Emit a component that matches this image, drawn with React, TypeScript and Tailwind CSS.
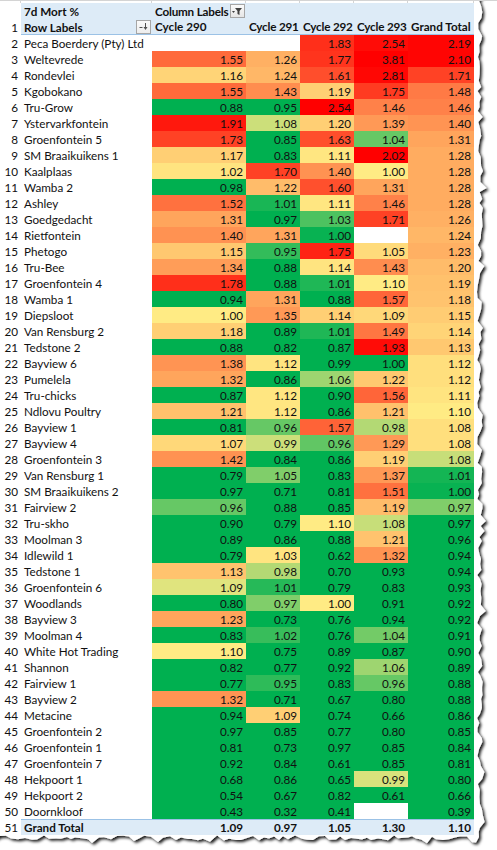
import React from "react";

type Row = [string, (number | null)[], number[]];
const G = -1;

const rows: Row[] = [
  ["Peca Boerdery (Pty) Ltd", [null, null, 1.83, 2.54, 2.19], [0, 0, 0.8, 0.95, 0.98]],
  ["Weltevrede", [1.55, 1.26, 1.77, 3.81, 2.1], [0.55, 0.25, 0.78, 1, 0.98]],
  ["Rondevlei", [1.16, 1.24, 1.61, 2.81, 1.71], [0.1, 0.22, 0.67, 0.97, 0.72]],
  ["Kgobokano", [1.55, 1.43, 1.19, 1.75, 1.48], [0.55, 0.4, 0.12, 0.75, 0.48]],
  ["Tru-Grow", [0.88, 0.95, 2.54, 1.46, 1.46], [G, G, 1, 0.45, 0.45]],
  ["Ystervarkfontein", [1.91, 1.08, 1.2, 1.39, 1.4], [0.9, -0.2, 0.12, 0.35, 0.37]],
  ["Groenfontein 5", [1.73, 0.85, 1.63, 1.04, 1.31], [0.72, G, 0.67, -0.6, 0.3]],
  ["SM Braaikuikens 1", [1.17, 0.83, 1.11, 2.02, 1.28], [0.12, G, 0.02, 1, 0.27]],
  ["Kaalplaas", [1.02, 1.7, 1.4, 1.0, 1.28], [0.03, 0.72, 0.38, 0, 0.27]],
  ["Wamba 2", [0.98, 1.22, 1.6, 1.31, 1.28], [G, 0.2, 0.66, 0.3, 0.27]],
  ["Ashley", [1.52, 1.01, 1.11, 1.46, 1.28], [0.52, -0.9, 0.02, 0.45, 0.27]],
  ["Goedgedacht", [1.31, 0.97, 1.03, 1.71, 1.26], [0.3, G, -0.7, 0.72, 0.25]],
  ["Rietfontein", [1.4, 1.31, 1.0, null, 1.24], [0.38, 0.3, -0.97, 0, 0.22]],
  ["Phetogo", [1.15, 0.95, 1.75, 1.05, 1.23], [0.15, -0.8, 0.85, 0.07, 0.25]],
  ["Tru-Bee", [1.34, 0.88, 1.14, 1.43, 1.2], [0.33, G, 0.03, 0.4, 0.2]],
  ["Groenfontein 4", [1.78, 0.88, 1.01, 1.1, 1.19], [0.8, G, -0.88, 0, 0.18]],
  ["Wamba 1", [0.94, 1.31, 0.88, 1.57, 1.18], [G, 0.3, G, 0.57, 0.17]],
  ["Diepsloot", [1.0, 1.35, 1.14, 1.09, 1.15], [0, 0.35, 0.12, 0.08, 0.13]],
  ["Van Rensburg 2", [1.18, 0.89, 1.01, 1.49, 1.14], [0.12, G, -0.88, 0.5, 0.1]],
  ["Tedstone 2", [0.88, 0.82, 0.87, 1.93, 1.13], [G, G, G, 0.95, 0.15]],
  ["Bayview 6", [1.38, 1.12, 0.99, 1.0, 1.12], [0.37, 0.03, G, G, 0.05]],
  ["Pumelela", [1.32, 0.86, 1.06, 1.22, 1.12], [0.3, G, -0.38, 0.15, 0.05]],
  ["Tru-chicks", [0.87, 1.12, 0.9, 1.56, 1.11], [G, 0.02, G, 0.57, 0.03]],
  ["Ndlovu Poultry", [1.21, 1.12, 0.86, 1.21, 1.1], [0.18, 0.02, G, 0.18, 0]],
  ["Bayview 1", [0.81, 0.96, 1.57, 0.98, 1.08], [G, -0.6, 0.58, -0.3, 0.05]],
  ["Bayview 4", [1.07, 0.99, 0.96, 1.29, 1.08], [0.08, -0.2, -0.62, 0.35, 0.05]],
  ["Groenfontein 3", [1.42, 0.84, 0.86, 1.19, 1.08], [0.38, G, G, 0.12, -0.22]],
  ["Van Rensburg 1", [0.79, 1.05, 0.83, 1.37, 1.01], [G, -0.5, G, 0.35, -0.92]],
  ["SM Braaikuikens 2", [0.97, 0.71, 0.81, 1.51, 1.0], [G, G, G, 0.52, -0.97]],
  ["Fairview 2", [0.96, 0.88, 0.85, 1.19, 0.97], [-0.6, G, G, 0.2, -0.5]],
  ["Tru-skho", [0.9, 0.79, 1.1, 1.08, 0.97], [G, G, 0, -0.22, G]],
  ["Moolman 3", [0.89, 0.86, 0.88, 1.21, 0.96], [G, G, G, 0.17, G]],
  ["Idlewild 1", [0.79, 1.03, 0.62, 1.32, 0.94], [G, 0.03, G, 0.37, G]],
  ["Tedstone 1", [1.13, 0.98, 0.7, 0.93, 0.94], [0.17, -0.3, G, G, G]],
  ["Groenfontein 6", [1.09, 1.01, 0.79, 0.83, 0.93], [-0.12, -0.85, G, G, G]],
  ["Woodlands", [0.8, 0.97, 1.0, 0.91, 0.92], [G, -0.5, 0, G, G]],
  ["Bayview 3", [1.23, 0.73, 0.76, 0.94, 0.92], [0.3, G, G, G, G]],
  ["Moolman 4", [0.83, 1.02, 0.76, 1.04, 0.91], [G, -0.78, G, -0.55, G]],
  ["White Hot Trading", [1.1, 0.75, 0.89, 0.87, 0.9], [0, G, G, G, G]],
  ["Shannon", [0.82, 0.77, 0.92, 1.06, 0.89], [G, G, G, -0.38, G]],
  ["Fairview 1", [0.77, 0.95, 0.83, 0.96, 0.88], [G, -0.82, G, -0.6, G]],
  ["Bayview 2", [1.32, 0.71, 0.67, 0.8, 0.88], [0.37, G, G, G, G]],
  ["Metacine", [0.94, 1.09, 0.74, 0.66, 0.86], [G, 0.12, G, G, G]],
  ["Groenfontein 2", [0.97, 0.85, 0.77, 0.8, 0.85], [G, G, G, G, G]],
  ["Groenfontein 1", [0.81, 0.73, 0.97, 0.85, 0.84], [G, G, G, G, G]],
  ["Groenfontein 7", [0.92, 0.84, 0.61, 0.85, 0.81], [G, G, G, G, G]],
  ["Hekpoort 1", [0.68, 0.86, 0.65, 0.99, 0.8], [G, G, G, -0.15, G]],
  ["Hekpoort 2", [0.54, 0.67, 0.82, 0.61, 0.66], [G, G, G, G, G]],
  ["Doornkloof", [0.43, 0.32, 0.41, null, 0.39], [G, G, G, 0, G]],
];

const totals = [1.09, 0.97, 1.05, 1.3, 1.1];

function colorFor(t: number): string {
  const green = [0, 176, 80];
  const yellow = [255, 235, 132];
  const red = [255, 0, 0];
  let a: number[], b: number[], f: number;
  if (t <= 0) {
    a = green;
    b = yellow;
    f = t + 1;
  } else {
    a = yellow;
    b = red;
    f = t;
  }
  const c = a.map((v, i) => Math.round(v + (b[i] - v) * f));
  return `rgb(${c.join(",")})`;
}

const valueWidths = ["w-[94px]", "w-[54px]", "w-[54px]", "w-[54px]", "w-[66px]"];

function tornPath(): string {
  let seed = 12345;
  const rnd = () => {
    seed = (seed * 1103515245 + 12345) % 2147483648;
    return seed / 2147483648;
  };
  const pts: string[] = ["M-5,-5", "L483,-5"];
  for (let y = 0; y <= 834; y += 4 + Math.floor(rnd() * 4)) {
    const spike = rnd() < 0.15 ? 4 : 0;
    const x = 480 + (rnd() - 0.5) * 6 + spike;
    pts.push(`L${x.toFixed(1)},${y}`);
  }
  pts.push("L479,837");
  for (let x = 476; x >= 0; x -= 4 + Math.floor(rnd() * 4)) {
    const spike = rnd() < 0.15 ? 3 : 0;
    const y = 838 + (rnd() - 0.5) * 5 + spike;
    pts.push(`L${x},${y.toFixed(1)}`);
  }
  pts.push("L-5,839", "Z");
  return pts.join(" ");
}

function FilterButton() {
  return (
    <div className="w-[15px] h-[14px] shrink-0 border border-[#A6A6A6] bg-gradient-to-b from-[#FAFAFA] to-[#E6E6E6] flex items-center justify-center">
      <svg width="11" height="9" viewBox="0 0 11 9">
        <polygon points="3,1 10,1 7.5,4 7.5,8 5.5,7 5.5,4" fill="#404040" />
        <polygon points="0,4 3,4 1.5,6" fill="#404040" />
      </svg>
    </div>
  );
}

function SortButton() {
  return (
    <div className="w-[15px] h-[14px] shrink-0 border border-[#A6A6A6] bg-gradient-to-b from-[#FAFAFA] to-[#EDEDED] flex items-center justify-center">
      <svg width="11" height="9" viewBox="0 0 11 9">
        <rect x="1.5" y="5" width="3" height="1" fill="#505050" />
        <rect x="7" y="1" width="1" height="6" fill="#505050" />
        <polygon points="5.5,5 9.5,5 7.5,8" fill="#505050" />
      </svg>
    </div>
  );
}

export default function App() {
  return (
    <div
      className="relative w-[497px] h-[850px] bg-white overflow-hidden text-[11.7px] text-[#111]"
      style={{ fontFamily: "Lato, 'Liberation Sans', sans-serif" }}
    >
      <svg className="absolute left-0 top-0" width="497" height="850">
        <defs>
          <filter id="tornShadow" x="-5%" y="-5%" width="115%" height="115%">
            <feDropShadow dx="2" dy="2" stdDeviation="1.5" floodColor="#000" floodOpacity="0.9" />
          </filter>
        </defs>
        <path d={tornPath()} fill="#fff" filter="url(#tornShadow)" />
      </svg>

      <div className="relative flex flex-col whitespace-nowrap">
        {/* top sliver of grid */}
        <div className="flex h-[3px] border-t border-[#D4D4D4]">
          <div className="w-[21px] border-r border-[#D4D4D4]" />
          <div className="w-[131px] border-r border-[#D4D4D4]" />
          {valueWidths.map((w, i) => (
            <div key={i} className={`${w} border-r border-[#D4D4D4]`} />
          ))}
        </div>

        {/* header row A */}
        <div className="flex h-4 font-bold">
          <div className="w-[21px]" />
          <div className="w-[131px] bg-[#DDEBF7] pl-[3px] leading-4">7d Mort %</div>
          <div className="w-[94px] bg-[#DDEBF7] pl-[3px] flex items-center justify-between pr-[1px]">
            <span className="leading-4 tracking-[-0.2px]">Column Labels</span>
            <FilterButton />
          </div>
          <div className="w-[54px] bg-[#DDEBF7]" />
          <div className="w-[54px] bg-[#DDEBF7]" />
          <div className="w-[54px] bg-[#DDEBF7]" />
          <div className="w-[66px] bg-[#DDEBF7]" />
        </div>

        {/* header row B */}
        <div className="flex h-4 font-bold">
          <div className="w-[21px] text-right pr-[3px] leading-4 font-normal">1</div>
          <div className="w-[131px] bg-[#DDEBF7] border-b border-[#9BC2E6] pl-[3px] flex items-center justify-between pr-[1px]">
            <span className="leading-4">Row Labels</span>
            <SortButton />
          </div>
          <div className="w-[94px] bg-[#DDEBF7] border-b border-[#9BC2E6] pl-[3px] leading-[15px]">Cycle 290</div>
          <div className="w-[54px] bg-[#DDEBF7] border-b border-[#9BC2E6] pl-[3px] leading-[15px] tracking-[-0.2px]">Cycle 291</div>
          <div className="w-[54px] bg-[#DDEBF7] border-b border-[#9BC2E6] pl-[3px] leading-[15px] tracking-[-0.2px]">Cycle 292</div>
          <div className="w-[54px] bg-[#DDEBF7] border-b border-[#9BC2E6] pl-[3px] leading-[15px] tracking-[-0.2px]">Cycle 293</div>
          <div className="w-[66px] bg-[#DDEBF7] border-b border-[#9BC2E6] pl-[3px] leading-[15px]">Grand Total</div>
        </div>

        {/* data rows */}
        {rows.map(([name, vals, ts], r) => (
          <div key={name} className="flex h-4 leading-4">
            <div className="w-[21px] text-right pr-[3px]">{r + 2}</div>
            <div className="w-[131px] pl-[3px]">{name}</div>
            {vals.map((v, i) => (
              <div
                key={i}
                className={`${valueWidths[i]} text-right pr-[3px]`}
                style={{ backgroundColor: v === null ? "#ffffff" : colorFor(ts[i]) }}
              >
                {v === null ? "" : v.toFixed(2)}
              </div>
            ))}
          </div>
        ))}

        {/* grand total */}
        <div className="flex h-4">
          <div className="w-[21px] text-right pr-[3px] leading-4">51</div>
          <div className="w-[131px] bg-[#DDEBF7] border-t border-[#9BC2E6] pl-[3px] font-bold leading-[15px]">
            Grand Total
          </div>
          {totals.map((v, i) => (
            <div
              key={i}
              className={`${valueWidths[i]} bg-[#DDEBF7] border-t border-[#9BC2E6] text-right pr-[3px] font-bold leading-[15px]`}
            >
              {v.toFixed(2)}
            </div>
          ))}
        </div>
      </div>
    </div>
  );
}
